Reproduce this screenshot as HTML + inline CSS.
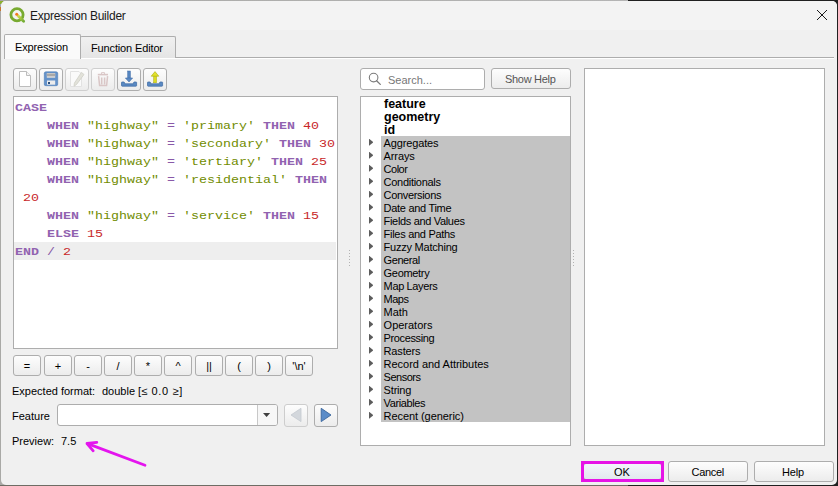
<!DOCTYPE html>
<html><head><meta charset="utf-8">
<style>
*{box-sizing:border-box;margin:0;padding:0}
html,body{width:838px;height:486px;overflow:hidden;background:linear-gradient(90deg,#a9a9a6 0,#b4b4b4 628px,#202020 628px);font-family:"Liberation Sans",sans-serif;font-size:11px;color:#000}
div,svg{position:absolute}
b,i{font-style:normal;font-weight:normal}
#win{left:1px;top:1px;width:836px;height:484px;background:#f0f0f0;border-radius:5px;overflow:hidden}
#title{left:1px;top:1px;width:836px;height:29px;background:#f3f3f3;border-radius:5px 5px 0 0}
.t{white-space:pre;line-height:12px}
.btn{border:1px solid #adadad;border-radius:3px;background:linear-gradient(#fdfdfd,#ececec)}
.frame{border:1px solid #adadad;background:#fff}
#code{left:15px;top:98.5px;width:322px;height:250px;font-family:"Liberation Mono",monospace;font-size:13.333px;white-space:pre}
.cl{left:0;height:20px;line-height:20.69px;transform:scaleY(0.885);transform-origin:0 0}
.k{color:#9163b0;font-weight:bold}
.o{color:#8959a8}
.s{color:#718c00}
.n{color:#c82829}
.r{left:361px;width:209px;height:13px}
.r .g{left:20px;width:189px;height:13px;background:#c3c3c3}
.r .lbl{left:22.6px;top:1px;line-height:13px;white-space:pre;letter-spacing:-0.2px}
.r .b{font-weight:bold;font-size:12.5px;left:23px;top:0.5px;letter-spacing:0}
.r .arr{left:7.8px;top:2.6px;width:4.6px;height:7.4px;background:#5c5c5c;clip-path:polygon(0 0,100% 50%,0 100%)}
.ob{width:28px;height:21px;text-align:center;line-height:21px;font-size:11px}
</style></head><body>
<div style="left:0;top:485px;width:628px;height:1px;background:#6e6c64"></div>
<div style="left:0;top:1px;width:3px;height:3px;background:#8cb030;border-radius:0 0 2px 0"></div>
<div style="left:0;top:7px;width:1px;height:4px;background:#c87830"></div>
<div id="win"></div>
<div id="title"></div>

<svg style="left:9px;top:7px" width="17" height="17" viewBox="0 0 17 17">
  <defs><linearGradient id="tl" x1="0" y1="0" x2="1" y2="1"><stop offset="0" stop-color="#d4dc50"/><stop offset="1" stop-color="#72ac34"/></linearGradient></defs>
  <circle cx="8" cy="7.7" r="6.1" fill="none" stroke="#78aa30" stroke-width="2.8"/>
  <path d="M9 8.8 L14.6 14.2" stroke="url(#tl)" stroke-width="2.9" stroke-linecap="round"/>
  <circle cx="7.7" cy="7.3" r="1.5" fill="#f07a1e"/>
</svg>
<div class="t" style="left:30px;top:10px;font-size:12px;letter-spacing:-0.25px;color:#1a1a1a">Expression Builder</div>
<svg style="left:816px;top:9px" width="12" height="12" viewBox="0 0 12 12">
  <path d="M1 1 L11 11 M11 1 L1 11" stroke="#1a1a1a" stroke-width="1"/>
</svg>

<div style="left:4px;top:57px;width:830px;height:1px;background:#adadad"></div>
<div style="left:4px;top:58px;width:830px;height:1px;background:#fff"></div>
<div style="left:80px;top:36px;width:96px;height:22px;border:1px solid #adadad;border-bottom:none;border-radius:2px 2px 0 0;background:linear-gradient(#f0f0f0,#e5e5e5)"></div>
<div style="left:4px;top:34px;width:77px;height:25px;border:1px solid #adadad;border-bottom:none;border-radius:2px 2px 0 0;background:#fafafa"></div>
<div class="t" style="left:15px;top:41px;letter-spacing:-0.15px">Expression</div>
<div class="t" style="left:91px;top:42px;letter-spacing:-0.14px">Function Editor</div>

<div class="btn" style="left:13px;top:68px;width:24px;height:23px"></div>
<div class="btn" style="left:39px;top:68px;width:24px;height:23px"></div>
<div class="btn" style="left:65px;top:68px;width:24px;height:23px;border-color:#cfcfcf"></div>
<div class="btn" style="left:91px;top:68px;width:24px;height:23px;border-color:#cfcfcf"></div>
<div class="btn" style="left:117px;top:68px;width:24px;height:23px"></div>
<div class="btn" style="left:143px;top:68px;width:24px;height:23px"></div>

<svg style="left:0;top:60px" width="180" height="35" viewBox="0 60 180 35">
 <path d="M19.5 71.5 H26.5 L30.5 75.5 V86.5 H19.5 Z" fill="#fff" stroke="#bdbdbd" stroke-width="1" stroke-linejoin="round"/>
 <path d="M26.5 71.5 V75.5 H30.5" fill="#f4f4f4" stroke="#bdbdbd" stroke-width="1"/>
 <rect x="44.3" y="71.8" width="13.4" height="13.9" rx="1.5" fill="#6492ca" stroke="#4d7cb6" stroke-width="0.6"/>
 <rect x="46.8" y="73" width="8.4" height="4.8" fill="#d8d8d8"/>
 <rect x="46.8" y="73.6" width="8.4" height="2.6" fill="#a8a8a8"/>
 <rect x="47" y="80.5" width="8.2" height="4.2" fill="#ececec"/>
 <rect x="48" y="82" width="2" height="2" fill="#2d4f7c"/>
 <path d="M70.5 71.5 H79 L81.5 74 V86.5 H70.5 Z" fill="#fafafa" stroke="#e2e2e2" stroke-width="1"/>
 <path d="M81.4 72.4 L84 74.5 L76.6 84.4 L74 86.3 L74.4 83.1 Z" fill="#e2e2da" stroke="#cfcfc7" stroke-width="0.8" stroke-linejoin="round"/>
 <path d="M97.8 74.6 H108" stroke="#d9c6c6" stroke-width="1.6"/>
 <path d="M101.5 74 V72.6 H104.5 V74" fill="none" stroke="#dccaca" stroke-width="1"/>
 <path d="M98.6 76.2 L99.6 85.6 H106.6 L107.6 76.2" fill="none" stroke="#d9c6c6" stroke-width="1.5"/>
 <path d="M101.7 77.5 V84.5 M104.6 77.5 V84.5" stroke="#d9c6c6" stroke-width="1.5"/>
 <rect x="127.7" y="71" width="2.7" height="7.8" fill="#5585c0" stroke="#3f6ca8" stroke-width="0.5"/>
 <path d="M125.4 78 H132.6 L129 82 Z" fill="#5a8ac4" stroke="#3f6ca8" stroke-width="0.6" stroke-linejoin="round"/>
 <path d="M121.5 82.4 Q121.5 82 122 82 H124 Q124.6 82 124.8 83.8 H133.3 Q133.5 82 134.1 82 H136.1 Q136.6 82 136.6 82.4 V85.6 Q136.6 86.2 135.9 86.2 H122.2 Q121.5 86.2 121.5 85.6 Z" fill="#5a89c2" stroke="#3a67a2" stroke-width="0.7"/>
 <rect x="153.7" y="75.6" width="2.8" height="7.2" fill="#dcdc24" stroke="#a8a80c" stroke-width="0.5"/>
 <path d="M151.2 76.2 H158.8 L155 71.6 Z" fill="#e2e22c" stroke="#a8a80c" stroke-width="0.6" stroke-linejoin="round"/>
 <path d="M147.5 82.4 Q147.5 82 148 82 H150 Q150.6 82 150.8 83.8 H159.3 Q159.5 82 160.1 82 H162.1 Q162.6 82 162.6 82.4 V85.6 Q162.6 86.2 161.9 86.2 H148.2 Q147.5 86.2 147.5 85.6 Z" fill="#5a89c2" stroke="#3a67a2" stroke-width="0.7"/>
</svg>
<div class="frame" style="left:13px;top:96px;width:325px;height:253px"></div>
<div style="left:14px;top:242px;width:322px;height:18px;background:#eeeeee"></div>
<div id="code"><div class="cl" style="top:0px"><b class="k">CASE</b></div>
<div class="cl" style="top:18px">    <b class="k">WHEN</b> <i class="s">"highway"</i> <i class="o">=</i> <i class="s">'primary'</i> <b class="k">THEN</b> <i class="n">40</i></div>
<div class="cl" style="top:36px">    <b class="k">WHEN</b> <i class="s">"highway"</i> <i class="o">=</i> <i class="s">'secondary'</i> <b class="k">THEN</b> <i class="n">30</i></div>
<div class="cl" style="top:54px">    <b class="k">WHEN</b> <i class="s">"highway"</i> <i class="o">=</i> <i class="s">'tertiary'</i> <b class="k">THEN</b> <i class="n">25</i></div>
<div class="cl" style="top:72px">    <b class="k">WHEN</b> <i class="s">"highway"</i> <i class="o">=</i> <i class="s">'residential'</i> <b class="k">THEN</b></div>
<div class="cl" style="top:90px"> <i class="n">20</i></div>
<div class="cl" style="top:108px">    <b class="k">WHEN</b> <i class="s">"highway"</i> <i class="o">=</i> <i class="s">'service'</i> <b class="k">THEN</b> <i class="n">15</i></div>
<div class="cl" style="top:126px">    <b class="k">ELSE</b> <i class="n">15</i></div>
<div class="cl" style="top:144px"><b class="k">END</b> <i class="o">/</i> <i class="n">2</i></div></div>

<div class="btn ob" style="left:13px;top:355px">=</div>
<div class="btn ob" style="left:44px;top:355px">+</div>
<div class="btn ob" style="left:74px;top:355px">-</div>
<div class="btn ob" style="left:104px;top:355px">/</div>
<div class="btn ob" style="left:134px;top:355px">*</div>
<div class="btn ob" style="left:164px;top:355px">^</div>
<div class="btn ob" style="left:195px;top:355px">||</div>
<div class="btn ob" style="left:225px;top:355px">(</div>
<div class="btn ob" style="left:255px;top:355px">)</div>
<div class="btn ob" style="left:285px;top:355px">'\n'</div>

<div class="t" style="left:12px;top:385px">Expected format:</div><div class="t" style="left:102px;top:385px">double [<span style="letter-spacing:0.65px">≤ 0.0 ≥</span>]</div>
<div class="t" style="left:12px;top:410px">Feature</div>
<div class="frame" style="left:57px;top:404px;width:221px;height:22px;border-radius:3px"></div>
<div style="left:257px;top:405px;width:20px;height:20px;border-left:1px solid #c8c8c8;background:#f7f7f7;border-radius:0 2px 2px 0"></div>
<div style="left:262.8px;top:412.8px;width:7.6px;height:4.2px;background:#404040;clip-path:polygon(0 0,100% 0,50% 100%)"></div>
<div class="btn" style="left:284px;top:404px;width:24px;height:23px;border-color:#cdcdcd"></div>
<div class="btn" style="left:314px;top:404px;width:24px;height:23px"></div>
<svg style="left:284px;top:404px" width="54" height="23" viewBox="284 404 54 23">
 <path d="M301 408.3 V421.6 L291 415 Z" fill="#d3d7dc" stroke="#c4c9cf" stroke-width="0.8" stroke-linejoin="round"/>
 <path d="M321.2 408.3 V421.6 L331 415 Z" fill="#5b8cc8" stroke="#3a659c" stroke-width="0.9" stroke-linejoin="round"/>
</svg>
<svg style="left:80px;top:436px" width="72" height="36" viewBox="80 436 72 36">
 <path d="M145 465.3 L87.5 443.6" stroke="#e414ee" stroke-width="2.8" stroke-linecap="round"/>
 <path d="M96.8 442.4 L87 443.5 L93.2 450.8" fill="none" stroke="#e414ee" stroke-width="2.8" stroke-linecap="round" stroke-linejoin="round"/>
</svg>
<div class="t" style="left:12px;top:435px">Preview:</div><div class="t" style="left:61px;top:435px">7.5</div>

<div class="frame" style="left:360px;top:68px;width:125px;height:22px;border-radius:3px"></div>
<svg style="left:360px;top:68px" width="30" height="22" viewBox="360 68 30 22">
 <circle cx="373.6" cy="77.6" r="4.3" fill="none" stroke="#7a7a7a" stroke-width="1.1"/>
 <path d="M376.6 80.8 L380.3 84.4" stroke="#7a7a7a" stroke-width="1.3" stroke-linecap="round"/>
</svg>
<div class="t" style="left:388px;top:74px;color:#777">Search...</div>
<div class="btn" style="left:491px;top:68px;width:80px;height:21px"></div>
<div class="t" style="left:505px;top:73px;color:#555;letter-spacing:-0.3px">Show Help</div>

<div class="frame" style="left:360px;top:96px;width:211px;height:350px"></div>
<div class="r" style="top:97px"><div class="lbl b">feature</div></div>
<div class="r" style="top:110px"><div class="lbl b">geometry</div></div>
<div class="r" style="top:123px"><div class="lbl b">id</div></div>
<div class="r" style="top:136px"><div class="g"></div><div class="arr"></div><div class="lbl" style="letter-spacing:-0.14px">Aggregates</div></div>
<div class="r" style="top:149px"><div class="g"></div><div class="arr"></div><div class="lbl" style="letter-spacing:-0.12px">Arrays</div></div>
<div class="r" style="top:162px"><div class="g"></div><div class="arr"></div><div class="lbl" style="letter-spacing:-0.50px">Color</div></div>
<div class="r" style="top:175px"><div class="g"></div><div class="arr"></div><div class="lbl" style="letter-spacing:-0.29px">Conditionals</div></div>
<div class="r" style="top:188px"><div class="g"></div><div class="arr"></div><div class="lbl" style="letter-spacing:-0.33px">Conversions</div></div>
<div class="r" style="top:201px"><div class="g"></div><div class="arr"></div><div class="lbl" style="letter-spacing:-0.30px">Date and Time</div></div>
<div class="r" style="top:214px"><div class="g"></div><div class="arr"></div><div class="lbl" style="letter-spacing:-0.33px">Fields and Values</div></div>
<div class="r" style="top:227px"><div class="g"></div><div class="arr"></div><div class="lbl" style="letter-spacing:-0.29px">Files and Paths</div></div>
<div class="r" style="top:240px"><div class="g"></div><div class="arr"></div><div class="lbl" style="letter-spacing:-0.23px">Fuzzy Matching</div></div>
<div class="r" style="top:253px"><div class="g"></div><div class="arr"></div><div class="lbl" style="letter-spacing:-0.43px">General</div></div>
<div class="r" style="top:266px"><div class="g"></div><div class="arr"></div><div class="lbl" style="letter-spacing:-0.31px">Geometry</div></div>
<div class="r" style="top:279px"><div class="g"></div><div class="arr"></div><div class="lbl" style="letter-spacing:-0.36px">Map Layers</div></div>
<div class="r" style="top:292px"><div class="g"></div><div class="arr"></div><div class="lbl" style="letter-spacing:-0.50px">Maps</div></div>
<div class="r" style="top:305px"><div class="g"></div><div class="arr"></div><div class="lbl" style="letter-spacing:-0.10px">Math</div></div>
<div class="r" style="top:318px"><div class="g"></div><div class="arr"></div><div class="lbl" style="letter-spacing:-0.01px">Operators</div></div>
<div class="r" style="top:331px"><div class="g"></div><div class="arr"></div><div class="lbl" style="letter-spacing:-0.37px">Processing</div></div>
<div class="r" style="top:344px"><div class="g"></div><div class="arr"></div><div class="lbl" style="letter-spacing:-0.17px">Rasters</div></div>
<div class="r" style="top:357px"><div class="g"></div><div class="arr"></div><div class="lbl" style="letter-spacing:-0.03px">Record and Attributes</div></div>
<div class="r" style="top:370px"><div class="g"></div><div class="arr"></div><div class="lbl" style="letter-spacing:-0.50px">Sensors</div></div>
<div class="r" style="top:383px"><div class="g"></div><div class="arr"></div><div class="lbl" style="letter-spacing:-0.18px">String</div></div>
<div class="r" style="top:396px"><div class="g"></div><div class="arr"></div><div class="lbl" style="letter-spacing:-0.38px">Variables</div></div>
<div class="r" style="top:409px"><div class="g"></div><div class="arr"></div><div class="lbl" style="letter-spacing:-0.07px">Recent (generic)</div></div>
<div style="left:349px;top:250px;width:1px;height:1px;background:#b2b2b2"></div>
<div style="left:349px;top:253px;width:1px;height:1px;background:#b2b2b2"></div>
<div style="left:349px;top:256px;width:1px;height:1px;background:#b2b2b2"></div>
<div style="left:349px;top:259px;width:1px;height:1px;background:#b2b2b2"></div>
<div style="left:349px;top:262px;width:1px;height:1px;background:#b2b2b2"></div>
<div style="left:349px;top:265px;width:1px;height:1px;background:#b2b2b2"></div>
<div style="left:573px;top:250px;width:1px;height:1px;background:#b2b2b2"></div>
<div style="left:573px;top:253px;width:1px;height:1px;background:#b2b2b2"></div>
<div style="left:573px;top:256px;width:1px;height:1px;background:#b2b2b2"></div>
<div style="left:573px;top:259px;width:1px;height:1px;background:#b2b2b2"></div>
<div style="left:573px;top:262px;width:1px;height:1px;background:#b2b2b2"></div>
<div style="left:573px;top:265px;width:1px;height:1px;background:#b2b2b2"></div>
<div class="frame" style="left:584px;top:68px;width:241px;height:378px"></div>

<div class="btn" style="left:583px;top:463px;width:79px;height:17px;background:linear-gradient(#f3f7fb,#e2e8ee)"></div>
<div style="left:581px;top:461px;width:83px;height:21px;border:3px solid #e614e6"></div>
<div class="btn" style="left:668px;top:461px;width:80px;height:21px"></div>
<div class="btn" style="left:754px;top:461px;width:80px;height:21px"></div>
<div class="t" style="left:614px;top:466px">OK</div>
<div class="t" style="left:691.5px;top:466px;letter-spacing:-0.3px">Cancel</div>
<div class="t" style="left:782px;top:466px;letter-spacing:-0.2px">Help</div>
</body></html>
